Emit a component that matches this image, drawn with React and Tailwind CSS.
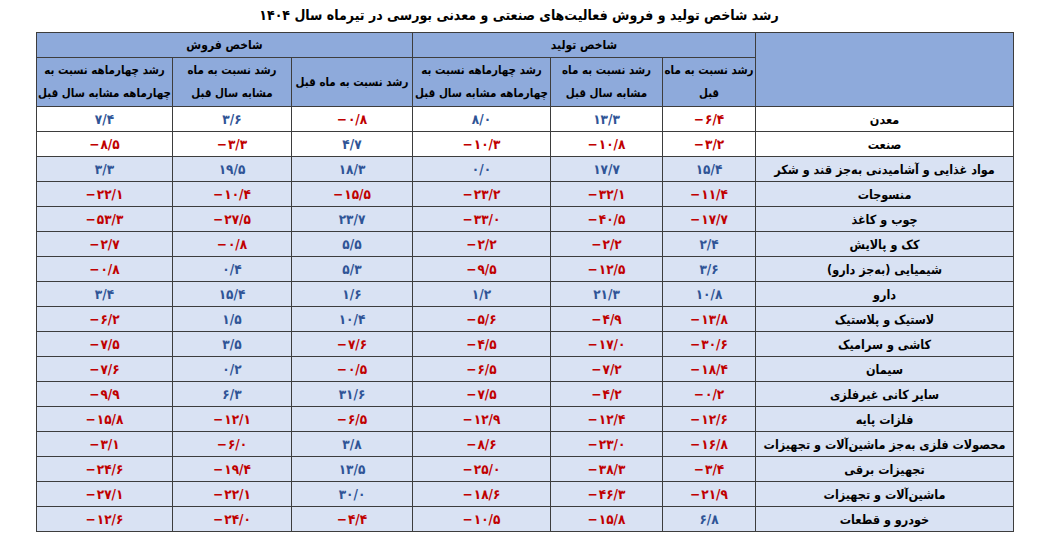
import React from 'react'

const rows = [
  ['معدن', '-۶/۴', '۱۳/۳', '۸/۰', '-۰/۸', '۳/۶', '۷/۴'],
  ['صنعت', '-۳/۲', '-۱۰/۸', '-۱۰/۳', '۴/۷', '-۳/۳', '-۸/۵'],
  ['مواد غذایی و آشامیدنی به‌جز قند و شکر', '۱۵/۴', '۱۷/۷', '۰/۰', '۱۸/۳', '۱۹/۵', '۳/۳'],
  ['منسوجات', '-۱۱/۴', '-۳۲/۱', '-۲۳/۲', '-۱۵/۵', '-۱۰/۴', '-۲۲/۱'],
  ['چوب و کاغذ', '-۱۷/۷', '-۴۰/۵', '-۳۳/۰', '۲۳/۷', '-۲۷/۵', '-۵۳/۳'],
  ['کک و پالایش', '۲/۴', '-۲/۲', '-۲/۲', '۵/۵', '-۰/۸', '-۲/۷'],
  ['شیمیایی (به‌جز دارو)', '۳/۶', '-۱۲/۵', '-۹/۵', '۵/۳', '۰/۴', '-۰/۸'],
  ['دارو', '۱۰/۸', '۲۱/۳', '۱/۲', '۱/۶', '۱۵/۴', '۳/۴'],
  ['لاستیک و پلاستیک', '-۱۳/۸', '-۴/۹', '-۵/۶', '۱۰/۴', '۱/۵', '-۶/۲'],
  ['کاشی و سرامیک', '-۳۰/۶', '-۱۷/۰', '-۴/۵', '-۷/۶', '۳/۵', '-۷/۵'],
  ['سیمان', '-۱۸/۴', '-۷/۲', '-۶/۵', '-۰/۵', '۰/۲', '-۷/۶'],
  ['سایر کانی غیرفلزی', '-۰/۲', '-۴/۲', '-۷/۵', '۳۱/۶', '۶/۳', '-۹/۹'],
  ['فلزات پایه', '-۱۲/۶', '-۱۲/۴', '-۱۲/۹', '-۶/۵', '-۱۲/۱', '-۱۵/۸'],
  ['محصولات فلزی به‌جز ماشین‌آلات و تجهیزات', '-۱۶/۸', '-۲۳/۰', '-۸/۶', '۳/۸', '-۶/۰', '-۳/۱'],
  ['تجهیزات برقی', '-۳/۴', '-۳۸/۳', '-۲۵/۰', '۱۳/۵', '-۱۹/۴', '-۲۴/۶'],
  ['ماشین‌آلات و تجهیزات', '-۲۱/۹', '-۴۶/۳', '-۱۸/۶', '۳۰/۰', '-۲۲/۱', '-۲۷/۱'],
  ['خودرو و قطعات', '۶/۸', '-۱۵/۸', '-۱۰/۵', '-۴/۴', '-۲۴/۰', '-۱۲/۶'],
]

const cell = 'border border-[#3d3d3d] text-center align-middle p-0 whitespace-nowrap overflow-hidden'

function Num({ v }) {
  const neg = v.startsWith('-')
  return (
    <span dir="ltr" className="inline-flex flex-row items-baseline">
      {neg && <span className="mr-[1px]">−</span>}
      <span>{neg ? v.slice(1) : v}</span>
    </span>
  )
}

export default function App() {
  return (
    <div className="w-[1038px] h-[549px] bg-white font-['DejaVu_Sans_Condensed','DejaVu_Sans',sans-serif] font-bold text-black">
      <div dir="rtl" className="h-[32px] flex items-center justify-center text-[14px] pb-[2px]">
        رشد شاخص تولید و فروش فعالیت‌های صنعتی و معدنی بورسی در تیرماه سال ۱۴۰۴
      </div>
      <table dir="rtl" className="ml-[36px] w-[977px] table-fixed border-collapse border-[1.5px] border-[#3d3d3d] text-[12px]">
        <colgroup>
          <col className="w-[258px]" />
          <col className="w-[93px]" />
          <col className="w-[112px]" />
          <col className="w-[138px]" />
          <col className="w-[121px]" />
          <col className="w-[119px]" />
          <col className="w-[136px]" />
        </colgroup>
        <thead className="bg-[#8eaadb] leading-[23px] text-[11.5px]">
          <tr className="h-[25px]">
            <th rowSpan={2} className={cell}></th>
            <th colSpan={3} className={`${cell} text-[12px]`}>شاخص تولید</th>
            <th colSpan={3} className={`${cell} text-[12px]`}>شاخص فروش</th>
          </tr>
          <tr className="h-[49px]">
            <th className={cell}>رشد نسبت به ماه<br />قبل</th>
            <th className={cell}>رشد نسبت به ماه<br />مشابه سال قبل</th>
            <th className={cell}>رشد چهارماهه نسبت به<br />چهارماهه مشابه سال قبل</th>
            <th className={cell}>رشد نسبت به ماه قبل</th>
            <th className={cell}>رشد نسبت به ماه<br />مشابه سال قبل</th>
            <th className={cell}>رشد چهارماهه نسبت به<br />چهارماهه مشابه سال قبل</th>
          </tr>
        </thead>
        <tbody>
          {rows.map((r, i) => (
            <tr key={r[0]} className={`h-[25px] ${i < 2 ? 'bg-white' : 'bg-[#d9e2f3]'}`}>
              <td className={`${cell} text-[12.5px] leading-[23px]`}>{r[0]}</td>
              {r.slice(1).map((v, j) => (
                <td
                  key={j}
                  className={`${cell} text-[13.5px] leading-[23px] ${v.startsWith('-') ? 'text-[#c00000]' : 'text-[#2f5496]'}`}
                >
                  <Num v={v} />
                </td>
              ))}
            </tr>
          ))}
        </tbody>
      </table>
    </div>
  )
}
